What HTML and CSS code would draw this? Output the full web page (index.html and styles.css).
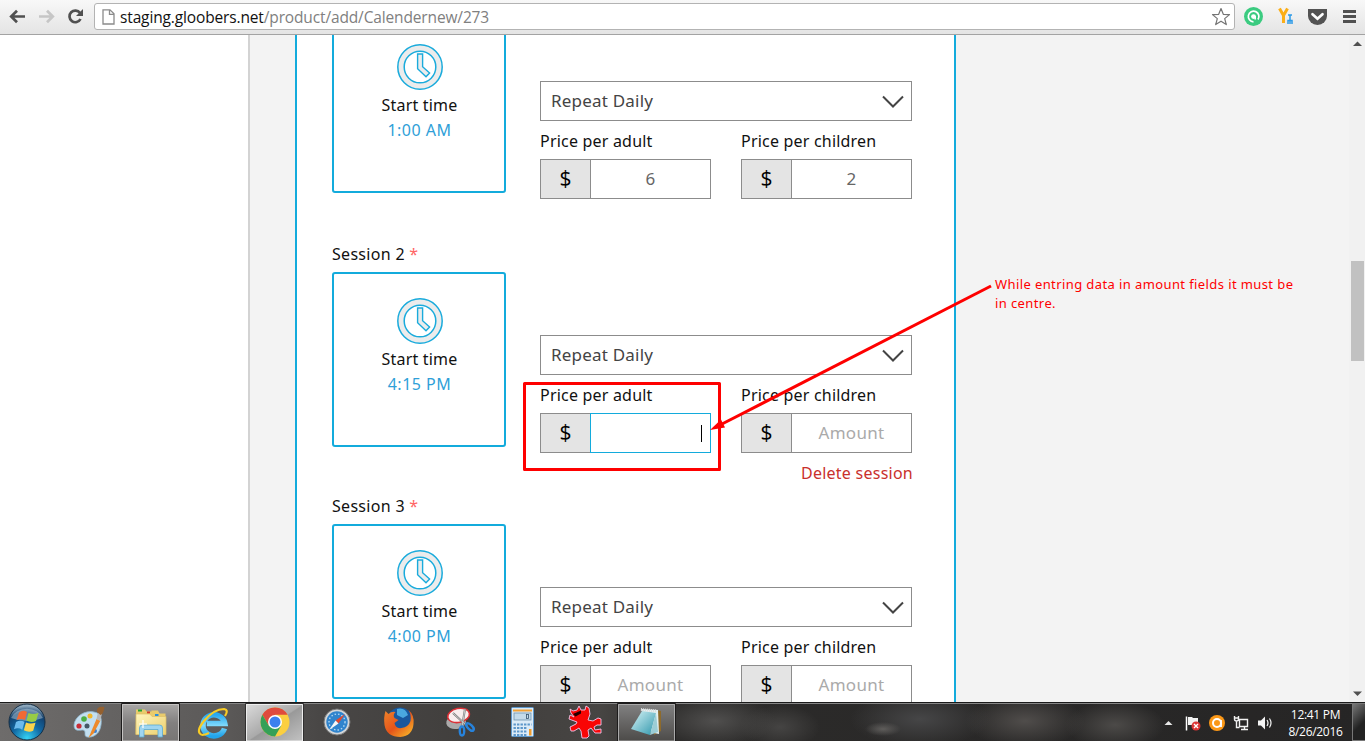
FILE: index.html
```html
<!DOCTYPE html>
<html lang="en">
<head>
<meta charset="utf-8">
<title>Calendar sessions</title>
<link rel="stylesheet" href="styles.css">
</head>
<body>
<svg class="defs" width="0" height="0">
  <symbol id="clock" viewBox="0 0 46 46">
    <circle cx="23" cy="23" r="22.2" fill="#ececec" stroke="#1aabdc" stroke-width="1.5"/>
    <circle cx="23" cy="23" r="15.8" fill="#fff" stroke="#1aabdc" stroke-width="1.5"/>
    <path d="M20.6 10h5v12.7l7 6.3-3.6 3.8-8.4-8z" fill="#ececec" stroke="#1aabdc" stroke-width="1.4"/>
  </symbol>
  <symbol id="chev" viewBox="0 0 22 13"><path d="M1 1.5l10 10 10-10" fill="none" stroke="#444" stroke-width="2"/></symbol>
</svg>

<header class="toolbar">
  <svg class="nav" width="80" height="34" viewBox="0 0 80 34" fill="none">
    <path d="M25 16.5H12M17 10.7l-5.8 5.8 5.8 5.8" stroke="#505050" stroke-width="2.7"/>
    <path d="M39 16.5h13M47 10.7l5.8 5.8-5.8 5.8" stroke="#c6c6c6" stroke-width="2.7"/>
    <path d="M80 13A5.800 5.800 0 1 0 80.500 19" stroke="#505050" stroke-width="2.700"/>
    <path d="M83 9v7h-7z" fill="#505050"/>
  </svg>
  <div class="omni">
    <svg width="13" height="16" viewBox="0 0 13 16"><path d="M1 .8h7l4 4V15H1zM7.500.8V5.300H12" fill="#fff" stroke="#8b8b8b" stroke-width="1.300"/></svg>
    <span class="url"><b>staging.gloobers.net</b>/product/add/Calendernew/273</span>
    <svg class="star" width="20" height="19" viewBox="0 0 20 19"><path d="M10 1.500l2.300 5.800 6.200.3-4.800 4 1.600 6L10 14.200l-5.300 3.400 1.600-6-4.800-4 6.200-.3z" fill="#fff" stroke="#747474" stroke-width="1.200" stroke-linejoin="round"/></svg>
  </div>
  <svg class="ext" width="130" height="34" viewBox="1235 0 130 34">
    <circle cx="1253.500" cy="16.500" r="9.500" fill="#3bcb80"/>
    <path d="M1258 19.500A5.300 5.300 0 1 0 1253.500 21.800" fill="none" stroke="#fff" stroke-width="1.700"/>
    <circle cx="1253.500" cy="16.600" r="2.400" fill="#fff"/><path d="M1255.200 16v3.500" stroke="#fff" stroke-width="1.600"/>
    <path d="M1279.500 8.500l4 7 4-7M1283.500 15v8" fill="none" stroke="#fbae17" stroke-width="3"/>
    <path d="M1290 15v9M1288 15h4M1288 24v-3.500h4V24" fill="none" stroke="#2d9be8" stroke-width="1.500"/>
    <path d="M1308 9h19v7a9.500 9 0 0 1-19 0z" fill="#535353"/>
    <path d="M1312.500 14.200l5 4.500 5-4.500" fill="none" stroke="#fff" stroke-width="2.700" stroke-linecap="round"/>
    <path d="M1343 11.500h13M1343 16.500h13M1343 21.500h13" stroke="#505050" stroke-width="2.800"/>
  </svg>
</header>

<main class="page">
  <div class="side"></div>
  <div class="gutter"></div>
  <section class="panel">
    <div class="session first">
      <div class="row">
        <div class="time"><svg width="46" height="46"><use href="#clock"/></svg><span>Start time</span><em>1:00 AM</em></div>
        <div class="form">
          <div class="select">Repeat Daily<svg width="22" height="13"><use href="#chev"/></svg></div>
          <div class="prices">
            <div class="price"><label>Price per adult</label><div class="field"><b>$</b><span class="val">6</span></div></div>
            <div class="price"><label>Price per children</label><div class="field"><b>$</b><span class="val">2</span></div></div>
          </div>
        </div>
      </div>
    </div>
    <div class="session">
      <div class="title">Session 2 <i>*</i></div>
      <div class="row">
        <div class="time"><svg width="46" height="46"><use href="#clock"/></svg><span>Start time</span><em>4:15 PM</em></div>
        <div class="form">
          <div class="select">Repeat Daily<svg width="22" height="13"><use href="#chev"/></svg></div>
          <div class="prices">
            <div class="price"><label>Price per adult</label><div class="field"><b>$</b><span class="val focus"><span class="caret"></span></span></div></div>
            <div class="price"><label>Price per children</label><div class="field"><b>$</b><span class="val hint">Amount</span></div></div>
          </div>
          <div class="delete">Delete session</div>
        </div>
      </div>
    </div>
    <div class="session">
      <div class="title">Session 3 <i>*</i></div>
      <div class="row">
        <div class="time"><svg width="46" height="46"><use href="#clock"/></svg><span>Start time</span><em>4:00 PM</em></div>
        <div class="form">
          <div class="select">Repeat Daily<svg width="22" height="13"><use href="#chev"/></svg></div>
          <div class="prices">
            <div class="price"><label>Price per adult</label><div class="field"><b>$</b><span class="val hint">Amount</span></div></div>
            <div class="price"><label>Price per children</label><div class="field"><b>$</b><span class="val hint">Amount</span></div></div>
          </div>
        </div>
      </div>
    </div>
  </section>
  <aside class="right"><p class="note">While entring data in amount fields it must be<br>in centre.</p></aside>
  <div class="scroll">
    <svg width="16" height="16"><path d="M4 11h9l-4.500-4.500z" fill="#505050"/></svg>
    <div class="thumb"></div>
    <svg width="16" height="16"><path d="M4 5.500h9L8.500 10z" fill="#505050"/></svg>
  </div>
</main>

<footer class="taskbar">
  <svg class="apps" width="690" height="39" viewBox="0 702 690 39">
    <defs>
      <linearGradient id="act" x1="0" y1="0" x2="0" y2="1"><stop offset="0" stop-color="#aaa8a7"/><stop offset=".5" stop-color="#828080"/><stop offset="1" stop-color="#777574"/></linearGradient>
      <linearGradient id="act2" x1="0" y1="0" x2="1" y2="1"><stop offset="0" stop-color="#ddd"/><stop offset=".5" stop-color="#aaa"/><stop offset=".52" stop-color="#999"/><stop offset="1" stop-color="#c4c4c4"/></linearGradient>
      <linearGradient id="act3" x1="0" y1="0" x2="0" y2="1"><stop offset="0" stop-color="#828282"/><stop offset="1" stop-color="#4b4947"/></linearGradient>
      <radialGradient id="orb" cx=".5" cy=".95" r=".9"><stop offset="0" stop-color="#35d3f5"/><stop offset=".45" stop-color="#1269a4"/><stop offset=".8" stop-color="#12406e"/><stop offset="1" stop-color="#8fa9bd"/></radialGradient>
      <linearGradient id="fold" x1="0" y1="0" x2="1" y2="1"><stop offset="0" stop-color="#fff5bd"/><stop offset="1" stop-color="#ecd070"/></linearGradient>
      <linearGradient id="ieg" x1="0" y1="0" x2="0" y2="1"><stop offset="0" stop-color="#29a9ee"/><stop offset=".5" stop-color="#7fd9fb"/><stop offset="1" stop-color="#22a4ea"/></linearGradient>
      <linearGradient id="pad" x1="0" y1="0" x2="1" y2="1"><stop offset="0" stop-color="#d8f5f8"/><stop offset="1" stop-color="#2f96ab"/></linearGradient>
      <linearGradient id="fox" x1="0" y1="0" x2="1" y2="1"><stop offset="0" stop-color="#f0842a"/><stop offset=".5" stop-color="#e4541a"/><stop offset="1" stop-color="#fcc52c"/></linearGradient>
    </defs>
    <!-- start orb -->
    <circle cx="27" cy="722" r="18" fill="url(#orb)" stroke="#162f45" stroke-width="1"/>
    <path d="M11 718a17 14 0 0 1 32 0q-16 6-32 0z" fill="#c8d9e5" opacity=".45"/>
    <path d="M19 712.500q4-3 8-.5l-2 8q-4-2-8.500 0z" fill="#f16a35"/>
    <path d="M28.500 713q4 2 10 0l-2.500 8q-5 2-9.500-.5z" fill="#98cc45"/>
    <path d="M16 722q4-2.500 8.500-.3l-2.200 8q-4-2.500-8.300-.5z" fill="#6cbbed"/>
    <path d="M26 722.500q4 2 9.500.3l-2.300 8q-4.500 2-9.400-.5z" fill="#fbd34b"/>
    <!-- paint -->
    <path d="M74 725c1-9 11-15 20-13 7 1 8 7 7 13-1 9-8 13-14 12-4-1 0-6-4-7-4 0-9 2-9-5z" fill="#c3dff0" stroke="#8db3ca" stroke-width=".8"/>
    <circle cx="79" cy="726" r="2.600" fill="#c92c36"/><circle cx="84" cy="719" r="2.800" fill="#4cae42"/><circle cx="90" cy="716" r="2.500" fill="#f2b72a"/><circle cx="87" cy="726" r="2.500" fill="#465766"/><circle cx="95" cy="731" r="2" fill="#3b7fd0"/>
    <path d="M88.500 738l8-19 4 1.500-7 13z" fill="#ee8a2b"/><path d="M96.500 719l1.500-7 4 2-2 7z" fill="#b8b8b8"/><path d="M97 712q-1-6 7.500-5-1 7-4 8z" fill="#94602f"/>
    <!-- explorer -->
    <path d="M121.500 742v-38.500h58V742z" fill="url(#act)" stroke="#1c1b1b"/><path d="M122.500 741v-36.500h56V741z" fill="none" stroke="#c5c3c2"/>
    <path d="M136 714v-4.500h9l1.500 2h5v-1h6.500l1.500 3h6v21h-30z" fill="#e9cb6c"/>
    <path d="M138 709.500h4v2h-4z" fill="#25a234"/><path d="M147 711.500h3v2h-3z" fill="#d43a2b"/><path d="M155 714h3.500v2h-3.500z" fill="#2c8edc"/>
    <path d="M136 714h14l2 2.500h14v18h-30z" fill="url(#fold)" stroke="#dcbf66" stroke-width=".7"/>
    <path d="M139.500 737v-9q0-3 3-3h17q3 0 3 3v9h-4.500v-7.500h-14v7.500z" fill="#9fd5f0" stroke="#5ba9d0" stroke-width=".8"/>
    <path d="M143 720v8M139 724h8" stroke="#fff" stroke-width="1.200"/>
    <!-- internet explorer -->
    <path d="M224.500 728.500a11 10.500 0 1 1 .3-5h-18" fill="none" stroke="url(#ieg)" stroke-width="5.500"/>
    <path d="M202 735q-7-3 2-14 10-12 20-12 5 1 1 7M202 735q3 0 7-2" fill="none" stroke="#f8cc25" stroke-width="2.200"/>
    <!-- chrome -->
    <path d="M245.500 742v-38.500h58V742z" fill="url(#act2)" stroke="#302f2f"/><path d="M246.500 741v-36.500h56V741z" fill="none" stroke="#eee"/>
    <circle cx="275" cy="722" r="14.500" fill="#fbcf40"/>
    <path d="M262.400 714.800A14.500 14.500 0 0 1 287.600 714.800H275L268.700 725.600z" fill="#df4b3d"/>
    <path d="M262.400 714.800A14.500 14.500 0 0 0 275 736.500L281.300 725.600 268.700 725.600z" fill="#35a057"/>
    <circle cx="275" cy="722" r="7" fill="#fff"/><circle cx="275" cy="722" r="5.500" fill="#3c80ee"/>
    <!-- safari -->
    <circle cx="337" cy="722" r="13" fill="#d3d6d8" stroke="#777"/><circle cx="337" cy="722" r="10.700" fill="#3084cd"/>
    <circle cx="337" cy="722" r="8" fill="none" stroke="#b6dcf5" stroke-width="1.300" stroke-dasharray="1.500 2"/>
    <path d="M345 714l-6.500 9.500-3-3z" fill="#e14a31"/><path d="M329 730l6.500-9.500 3 3z" fill="#f7f7f7"/>
    <!-- firefox -->
    <circle cx="400" cy="720.500" r="13" fill="#19579d"/><path d="M397 709q8-2 11 6l-5 3-6-3z" fill="#4aa8df"/>
    <path d="M385.500 711l3 3q3-3 7-2-3 3-1 6l4 2-4 3q1 6 7 5 7-1 9-7 1-6-2-11 6 5 5 14-1 12-13 13-14 0-16-12-1-8 1-14z" fill="url(#fox)"/>
    <!-- snipping tool -->
    <ellipse cx="456" cy="722" rx="10" ry="7" fill="#aaa" transform="rotate(-10 456 721)"/><ellipse cx="458.500" cy="715.500" rx="11" ry="7" fill="#f8eeee" stroke="#dc3036" stroke-width="1.500" transform="rotate(-12 458 715)"/>
    <path d="M453 713l14 13M465 709l-3 18" stroke="#777" stroke-width="2"/><path d="M453 713l14 13M465 709l-3 18" stroke="#ddd" stroke-width=".8"/>
    <ellipse cx="462" cy="731" rx="2.200" ry="4.500" fill="none" stroke="#2783dc" stroke-width="2.400"/><ellipse cx="470" cy="727" rx="2.200" ry="4.800" transform="rotate(-45 470 727)" fill="none" stroke="#2783dc" stroke-width="2.400"/>
    <!-- calculator -->
    <rect x="511.500" y="707.500" width="22" height="29" rx="1" fill="#dcebf7" stroke="#5d97ca"/><path d="M513 709.500h19v2h-19z" fill="#f2a134"/><rect x="514" y="713" width="17" height="7" fill="#c4dbea" stroke="#6f93ae" stroke-width=".8"/>
    <rect x="526.500" y="714.500" width="2" height="4" fill="none" stroke="#35536c" stroke-width=".8"/>
    <path d="M513.500 724.500h18M513.500 728h14M513.500 731.500h14M513.500 735h14" stroke="#5d97ca" stroke-width="2.200" stroke-dasharray="2.400 1.100"/><path d="M529 729h2.500v6.500H529z" fill="#ee9b2c"/>
    <!-- splat creature -->
    <path d="M570 709L573 711 577 710 579 706 581 710 585 710 586 706 589 708 590 714 588 720 593 721 598 718 601 719 601 725 597 725 594 727 595 730 601 729 601 733 595 733 591 728 588 730 589 736 587 738 582 738 581 731 579 728 574 731 571 731 570 727 576 724 577 722 569 719 570 715 574 717 571 713z" fill="#f90505" stroke="#f0c8ee" stroke-width=".9"/><path d="M573 714l8-3.500v3l-5.500 3z" fill="#200"/>
    <!-- notepad -->
    <path d="M617.500 742v-38.500h58V742z" fill="url(#act3)" stroke="#1c1b1b"/><path d="M618.500 741v-36.500h56V741z" fill="none" stroke="#aaa"/>
    <path d="M655 710l6 1v20l-7 4z" fill="#8d6a2c"/><path d="M642 709l16 1 1 24-15-3z" fill="#e3f1f3"/><path d="M642 711l14 2-6 22-19-6z" fill="url(#pad)"/><path d="M656 713l2 19-8 3z" fill="#9ccdd5"/>
    <path d="M641 709.500l16 1.500" stroke="#ddd" stroke-width="3" stroke-dasharray="1 1"/>
  </svg>
  <div class="tray">
    <svg width="122" height="39" viewBox="1160 702 122 39">
      <path d="M1164.500 725h8l-4-4z" fill="#e6e6e6"/>
      <path d="M1186.500 716.500v14" stroke="#fff" stroke-width="1.500"/><path d="M1188 717h4l1 1h5v8h-5l-1-1h-4z" fill="#f2f2f2"/>
      <circle cx="1196" cy="726" r="4.500" fill="#dc3535"/><path d="M1194 724l4 4M1198 724l-4 4" stroke="#fff" stroke-width="1.400"/>
      <circle cx="1217" cy="723" r="8" fill="#fb9817"/><circle cx="1217" cy="723" r="4" fill="none" stroke="#fff" stroke-width="2"/><path d="M1221 720v7" stroke="#fff" stroke-width="1.800"/>
      <path d="M1239.500 719.500h8v7h-8zM1241 729.500h7M1244.500 727v3M1234.500 716v3q0 2 2 2t2-2v-3M1236.500 721v6.500h3M1234 718h5" fill="none" stroke="#f2f2f2" stroke-width="1.400"/>
      <path d="M1258 720.500h3l4-4v13l-4-4h-3z" fill="#f4f4f4"/><path d="M1267 720q2 3 0 6M1269.500 718.500q3 4.500 0 9" fill="none" stroke="#f4f4f4" stroke-width="1.200"/>
    </svg>
    <div class="date"><span>12:41 PM</span><span>8/26/2016</span></div>
    <div class="peek"></div>
  </div>
</footer>

<svg class="markup" width="1365" height="741" viewBox="0 0 1365 741">
  <rect x="524.500" y="383.500" width="195" height="86" fill="none" stroke="#fe0000" stroke-width="3" stroke-linejoin="round"/>
  <path d="M991 286L722 424" stroke="#fe0000" stroke-width="3"/>
  <path d="M710 430l11-10.500 4 8z" fill="#fe0000"/>
</svg>
</body>
</html>
```
FILE: styles.css
```css
* { box-sizing: border-box; }
body { margin: 0; width: 1365px; height: 741px; overflow: hidden; display: flex; flex-direction: column; background: #fff; font-family: "Noto Sans", "Open Sans", sans-serif; color: #111; }
svg { display: block; flex: none; }
.defs { position: absolute; }

.toolbar { flex: none; height: 35px; display: flex; align-items: flex-start; background: linear-gradient(#f8f8f8, #e4e4e4); border-bottom: 1px solid #a3a3a3; }
.nav { overflow: visible; margin-right: 14px; }
.omni { width: 1141px; height: 27px; margin-top: 3px; padding: 0 3px 0 7px; display: flex; align-items: center; background: #fff; border: 1px solid #b3b3b3; border-radius: 3px; }
.url { margin-left: 5px; font: 15.5px/24px "Open Sans", sans-serif; color: #808080; letter-spacing: -0.14px; white-space: nowrap; }
.url b { font-weight: 400; color: #111; }
.star { margin-left: auto; }

.page { height: 667px; flex: none; display: flex; overflow: hidden; }
.side { width: 250px; border-right: 2px solid #d3d3d3; }
.gutter { width: 45px; background: #f3f3f3; }
.panel { width: 661px; border: solid #13abdc; border-width: 0 2px; padding: 0 42px 0 35px; }
.session { height: 252px; }
.first { height: 226px; margin-top: -17px; }
.title { height: 28px; font-size: 16px; line-height: 20px; letter-spacing: .3px; }
.title i { font-style: normal; color: #f66; }
.row { display: flex; gap: 34px; }
.time { width: 174px; height: 175px; flex: none; border: 2px solid #13abdc; border-radius: 3px; padding: 24px 0 0 1px; display: flex; flex-direction: column; align-items: center; font-size: 16px; line-height: 25px; letter-spacing: .2px; }
.time span { margin-top: 3px; }
.time em { font-style: normal; color: #2f9fd8; letter-spacing: .5px; }
.form { width: 372px; padding-top: 63px; }
.select { height: 40px; border: 1px solid #8c8c8c; padding: 0 7px 0 10px; display: flex; align-items: center; justify-content: space-between; font-size: 17px; line-height: 36px; padding-bottom: 1px; color: #444; letter-spacing: .2px; }
.select svg { margin-top: 2px; }
.prices { display: flex; gap: 30px; }
.price { width: 171px; }
.price label { display: block; height: 38px; line-height: 40px; font-size: 16px; letter-spacing: .2px; white-space: nowrap; }
.field { height: 40px; display: flex; border: 1px solid #8c8c8c; }
.field b { width: 50px; font-weight: 400; font-family: "Open Sans", sans-serif; font-size: 21px; line-height: 36px; text-align: center; background: #e4e4e4; border-right: 1px solid #8c8c8c; color: #000; }
.val { flex: 1; font-size: 17px; line-height: 38px; text-align: center; color: #666; letter-spacing: .3px; }
.hint { color: #aaa; }
.focus { margin: -1px; border: 1px solid #13abdc; display: flex; justify-content: flex-end; align-items: center; padding-right: 8px; }
.caret { width: 1px; height: 17px; background: #000; }
.delete { margin-top: 10px; font-size: 16px; line-height: 20px; text-align: right; color: #c9302c; letter-spacing: .25px; margin-right: -1px; }
.right { width: 393px; background: #f3f3f3; padding: 240px 0 0 39px; }
.note { margin: 0; font-size: 13px; line-height: 19px; letter-spacing: .4px; color: #f00; white-space: nowrap; }
.scroll { width: 16px; background: #f1f1f1; display: flex; flex-direction: column; }
.thumb { height: 100px; width: 13px; margin: 210px 0 auto 2px; background: #c1c1c1; }

.taskbar { height: 39px; flex: none; display: flex; justify-content: space-between; border-top: 1px solid #1b1b1b; box-shadow: inset 0 1px #858585;
  background: radial-gradient(ellipse 18px 7px at 883px 26px, #5f5d5b, transparent), radial-gradient(ellipse 60px 26px at 715px 18px, #504f4e, transparent), radial-gradient(ellipse 40px 22px at 780px 24px, #454443, transparent), radial-gradient(ellipse 70px 28px at 920px 16px, #464647, transparent), radial-gradient(ellipse 60px 26px at 1025px 18px, #504d4b, transparent), radial-gradient(ellipse 50px 24px at 1115px 22px, #4c4a48, transparent), linear-gradient(90deg, #6e6c6b, #5c5a59 220px, #494746 320px, #403e3c 480px, #474543 600px, #2c2b2a 680px, #262525); }
.apps { margin-top: -1px; }
.tray { display: flex; color: #fff; }
.tray > svg { margin-top: -1px; }
.date { width: 67px; padding-top: 3px; display: flex; flex-direction: column; align-items: center; font: 12px/17px "Open Sans", sans-serif; letter-spacing: -.3px; }
.peek { width: 13px; margin-left: 3px; border: 1px solid #777; border-right: 0; background: linear-gradient(135deg, #777, #222 60%); }

.markup { position: absolute; left: 0; top: 0; }
```
